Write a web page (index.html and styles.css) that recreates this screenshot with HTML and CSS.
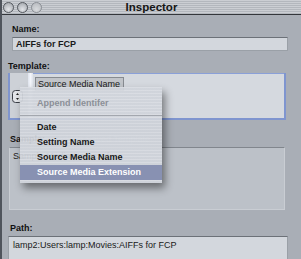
FILE: index.html
```html
<!DOCTYPE html>
<html lang="en">

<head>
    <meta charset="UTF-8">
    <title>Inspector</title>
    <link rel="stylesheet" href="styles.css">
</head>

<body>
    <div class="window">
        <div class="titlebar">
            <div class="lights">
                <span class="light"></span>
                <span class="light"></span>
                <span class="light off"></span>
            </div>
            <div class="title">Inspector</div>
            <div></div>
        </div>

        <div class="content">
            <div class="label indent">Name:</div>
            <div class="field name-field">AIFFs for FCP</div>

            <div class="label template-label">Template:</div>
            <div class="template">
                <div class="gutter">
                    <svg class="stepper" width="11" height="13" viewBox="0 0 11 13">
                        <rect x="0.5" y="0.5" width="10" height="12" rx="3" fill="#e4e6ea" stroke="#3c4048" />
                        <path d="M5.5 3 L4 5 L7 5 Z" fill="#222" />
                        <path d="M5.5 10 L4 8 L7 8 Z" fill="#222" />
                    </svg>
                </div>
                <div class="divider"></div>
                <div class="tokens">
                    <span class="token">Source Media Name</span>
                </div>
            </div>

            <div class="label sample-label">Sample:<span class="ghost">Add to Saved Template</span></div>
            <div class="sample-box">Sample Media Name.aif</div>

            <div class="label path-label">Path:</div>
            <div class="field path-field">lamp2:Users:lamp:Movies:AIFFs for FCP</div>
        </div>

        <!-- popup menu over the template field -->
        <div class="menu">
            <div class="menu-item disabled">Append Identifer</div>
            <div class="separator"></div>
            <div class="menu-item">Date</div>
            <div class="menu-item">Setting Name</div>
            <div class="menu-item">Source Media Name</div>
            <div class="menu-item selected">Source Media Extension</div>
        </div>
    </div>
</body>

</html>
```

FILE: styles.css
```css
body {
    margin: 0;
    padding: 0;
    font-family: "Liberation Sans", Arial, sans-serif;
    background-color: #a9aeb6;
    overflow: hidden;
}

.window {
    position: relative;
    width: 301px;
    height: 259px;
    box-sizing: border-box;
    border-left: 2px solid #4f545c;
    background-color: #a9aeb6;
    overflow: hidden;
}

.titlebar {
    height: 14px;
    display: grid;
    grid-template-columns: 1fr auto 1fr;
    align-items: center;
    border-bottom: 1px solid #33363b;
    background: repeating-linear-gradient(#cbced3 0 1px, #b3b7bd 1px 2px);
}

.lights {
    display: flex;
    gap: 3px;
    padding-left: 1px;
}

.light {
    width: 9px;
    height: 9px;
    border-radius: 50%;
    border: 1px solid #55595f;
    background: radial-gradient(circle at 50% 70%, #e2e4e8, #9da1a7);
}

.light.off {
    border-color: #8a8e94;
    background: radial-gradient(circle at 50% 70%, #d8dadd, #b3b6bb);
}

.title {
    font-size: 11.5px;
    font-weight: bold;
    color: #151515;
}

.content {
    padding: 0 13px 0 6px;
}

.label {
    font-size: 9px;
    font-weight: bold;
    line-height: 11px;
    color: #111;
}

.indent {
    margin-top: 9px;
    padding-left: 4px;
}

.field {
    box-sizing: border-box;
    background-color: #d3d7dd;
    border: 1px solid #9aa0a7;
    border-top-color: #6c7178;
    font-size: 9px;
    color: #1a1a1a;
    padding-left: 3px;
}

.name-field {
    margin: 2px 0 0 4px;
    height: 14px;
    line-height: 12px;
    font-weight: bold;
}

.template-label {
    margin-top: 10px;
}

.template {
    margin: 1px 2px 0 0;
    height: 47px;
    box-sizing: border-box;
    display: flex;
    background-color: #d5d9df;
    border: 2px solid #7f95cf;
    border-top-width: 0;
    box-shadow: inset 0 1px 0 #8aa0d8;
}

.gutter {
    width: 16px;
    background-color: #cdd1d7;
    padding: 17px 0 0 2px;
}

.stepper {
    display: block;
}

.divider {
    width: 5px;
    background: linear-gradient(90deg, #dfe4ee, #f4f6fb, #dde2ea);
}

.tokens {
    padding-left: 2px;
}

.token {
    display: inline-block;
    height: 14px;
    box-sizing: border-box;
    padding: 0 3px 0 2px;
    line-height: 12px;
    font-size: 9px;
    color: #1a1a1a;
    background-color: #c1c4c9;
    border: 1px solid #878b91;
}

.sample-label {
    margin-top: 14px;
    padding-left: 2px;
}

.ghost {
    margin-left: 12px;
    font-weight: normal;
    color: #c8ccd2;
}

.sample-box {
    margin: 2px 3px 0 1px;
    height: 63px;
    box-sizing: border-box;
    padding: 2px 3px;
    background-color: #bcc1c8;
    border: 1px solid #c9cdd3;
    border-top-color: #81868d;
    font-size: 9px;
    line-height: 12px;
    color: #222;
}

.path-label {
    margin-top: 13px;
    padding-left: 2px;
}

.path-field {
    margin-top: 2px;
    height: 26px;
    line-height: 16px;
    padding-left: 4px;
}

.menu {
    position: absolute;
    left: 18px;
    top: 87px;
    width: 142px;
    padding: 9px 0 3px;
    background: repeating-linear-gradient(rgba(218, 221, 227, 0.93) 0 1px, rgba(208, 212, 219, 0.93) 1px 3px);
    box-shadow: 3px 5px 8px rgba(0, 0, 0, 0.45);
}

.menu-item {
    height: 15px;
    line-height: 15px;
    padding-left: 17px;
    font-size: 9px;
    font-weight: bold;
    color: #181818;
}

.menu-item.disabled {
    color: #8b8f97;
}

.menu-item.selected {
    background-color: #8891b2;
    color: #fff;
}

.separator {
    height: 1px;
    margin: 4px 0 4px;
    background-color: #a3a7ae;
}
```
